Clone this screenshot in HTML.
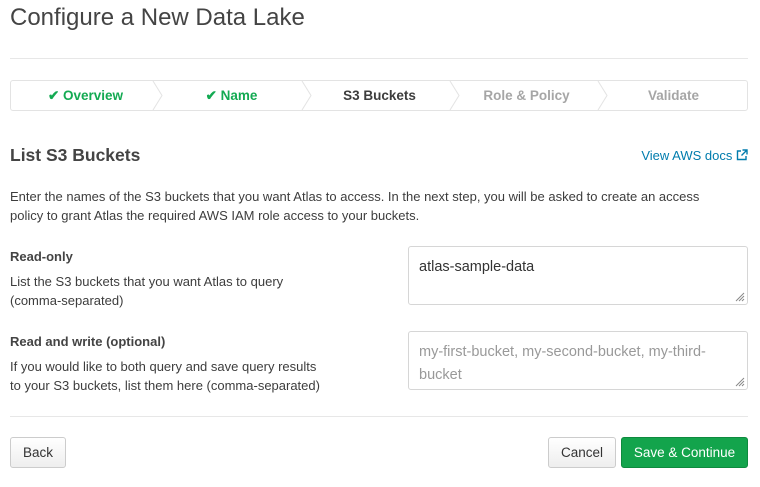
<!DOCTYPE html>
<html><head><style>
*{box-sizing:border-box;margin:0;padding:0}
body{width:760px;height:487px;background:#fff;font-family:"Liberation Sans",sans-serif;color:#3d3d3d;position:relative;overflow:hidden}
.a{position:absolute}
h1{position:absolute;left:10px;top:4px;font-size:24px;font-weight:normal;color:#444}
.hr{position:absolute;left:10px;width:738px;height:1px;background:#e7e7e7}
.step{position:absolute;top:80px;height:31px;border:1px solid #e3e3e3;border-radius:3px;left:10px;width:738px;background:#fff}
.s{position:absolute;top:88px;font-size:13.5px;font-weight:bold;text-align:center;width:147px}
h2{position:absolute;left:10px;top:145px;font-size:17.5px;font-weight:bold;color:#444}
.p{font-size:13px;line-height:19px;color:#3d3d3d}
.lb{font-size:13px;font-weight:bold;color:#444}
.ta{position:absolute;left:408px;width:340px;border:1px solid #d6d6d6;border-radius:3px;font-size:14.5px;padding:9px 10px;line-height:23px}
.grip{position:absolute;right:2px;bottom:2px}
.btn{position:absolute;top:437px;height:31px;border:1px solid #ccc;border-radius:3px;background:linear-gradient(#fff,#eee);font-size:13.5px;text-align:center;line-height:29px;color:#333}
</style></head><body>
<h1>Configure a New Data Lake</h1>
<div class="hr" style="top:58px"></div>
<div class="step"></div>
<svg class="a" style="left:0;top:80px" width="760" height="31">
<g fill="none" stroke="#e3e3e3" stroke-width="1">
<path d="M153 1 L162 15.5 L153 30"/><path d="M302 1 L311 15.5 L302 30"/><path d="M450 1 L459 15.5 L450 30"/><path d="M598 1 L607 15.5 L598 30"/></g></svg>
<div class="s" style="left:12px;color:#13aa52">✔ Overview</div>
<div class="s" style="left:158px;color:#13aa52">✔ Name</div>
<div class="s" style="left:306px;color:#3d3d3d">S3 Buckets</div>
<div class="s" style="left:453px;color:#a6a6a6">Role &amp; Policy</div>
<div class="s" style="left:600px;color:#a6a6a6">Validate</div>
<h2>List S3 Buckets</h2>
<div class="a" style="right:12px;top:148px;font-size:13px;color:#007cad">View AWS docs <svg width="12" height="12" viewBox="0 0 12 12" style="vertical-align:-1px"><path d="M5 2H1.5v8.5H10V7" fill="none" stroke="#007cad" stroke-width="1.4"/><path d="M6.5 1H11v4.5M11 1L5.5 6.5" fill="none" stroke="#007cad" stroke-width="1.4"/></svg></div>
<div class="a p" style="left:10px;top:187px;width:725px">Enter the names of the S3 buckets that you want Atlas to access. In the next step, you will be asked to create an access policy to grant Atlas the required AWS IAM role access to your buckets.</div>
<div class="a lb" style="left:10px;top:249px">Read-only</div>
<div class="a p" style="left:10px;top:272px">List the S3 buckets that you want Atlas to query<br>(comma-separated)</div>
<div class="ta" style="top:246px;height:59px;color:#333">atlas-sample-data<svg class="grip" width="12" height="12"><path d="M11 3L3 11M11 6L6 11M11 9L9 11" stroke="#888" stroke-width="1"/></svg></div>
<div class="a lb" style="left:10px;top:334px">Read and write (optional)</div>
<div class="a p" style="left:10px;top:357px">If you would like to both query and save query results<br>to your S3 buckets, list them here (comma-separated)</div>
<div class="ta" style="top:331px;height:59px;color:#999">my-first-bucket, my-second-bucket, my-third-bucket<svg class="grip" width="12" height="12"><path d="M11 3L3 11M11 6L6 11M11 9L9 11" stroke="#888" stroke-width="1"/></svg></div>
<div class="hr" style="top:416px"></div>
<div class="btn" style="left:10px;width:56px">Back</div>
<div class="btn" style="left:548px;width:68px">Cancel</div>
<div class="btn" style="left:621px;width:127px;background:#13a44c;border-color:#0e8a3e;color:#fff">Save &amp; Continue</div>
</body></html>
